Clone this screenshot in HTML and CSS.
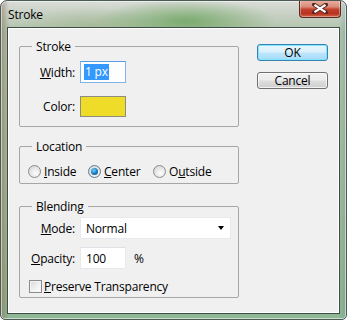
FILE: index.html
```html
<!DOCTYPE html>
<html>
<head>
<meta charset="utf-8">
<link rel="stylesheet" href="styles.css">
</head>
<body>
<div class="window">
  <div class="titlebar">
    <span class="title">Stroke</span>
    <div class="close">
      <svg width="16" height="11" viewBox="0 0 16 11">
        <path d="M2 1.5 L14 9.5 M14 1.5 L2 9.5" stroke="#5a2a22" stroke-width="4" stroke-linecap="square"/>
        <path d="M2.5 1.8 L13.5 9.2 M13.5 1.8 L2.5 9.2" stroke="#ffffff" stroke-width="2.2" stroke-linecap="butt"/>
      </svg>
    </div>
  </div>
  <div class="client">
    <div class="groups">
      <fieldset class="group g-stroke">
        <legend>Stroke</legend>
        <div class="gbody stroke-body">
          <div class="row row-width">
            <label class="lbl"><u>W</u>idth:</label>
            <div class="textbox focused"><span class="sel">1 px</span></div>
          </div>
          <div class="row row-color">
            <label class="lbl">Color:</label>
            <div class="swatch"></div>
          </div>
        </div>
      </fieldset>
      <fieldset class="group g-location">
        <legend>Location</legend>
        <div class="gbody location-body">
          <span class="opt opt-inside"><span class="radio"></span><span><u>I</u>nside</span></span>
          <span class="opt opt-center"><span class="radio checked"><span class="dot"></span></span><span><u>C</u>enter</span></span>
          <span class="opt opt-outside"><span class="radio"></span><span>O<u>u</u>tside</span></span>
        </div>
      </fieldset>
      <fieldset class="group g-blending">
        <legend>Blending</legend>
        <div class="gbody blending-body">
          <div class="row row-mode">
            <label class="lbl"><u>M</u>ode:</label>
            <div class="select"><span>Normal</span><span class="arrow"></span></div>
          </div>
          <div class="row row-opacity">
            <label class="lbl"><u>O</u>pacity:</label>
            <div class="textbox plain"><span>100</span></div>
            <span class="pct">%</span>
          </div>
          <div class="row row-check">
            <span class="checkbox"></span><span><u>P</u>reserve Transparency</span>
          </div>
        </div>
      </fieldset>
    </div>
    <div class="buttons">
      <button class="btn default">OK</button>
      <button class="btn">Cancel</button>
    </div>
  </div>
</div>
</body>
</html>
```
FILE: styles.css
```css
html, body {
  margin: 0;
  padding: 0;
  background: #ffffff;
}
body {
  font-family: "Open Sans", "Noto Sans", sans-serif;
  font-size: 12px;
  letter-spacing: -0.2px;
  color: #000;
}
.window {
  width: 347px;
  height: 320px;
  box-sizing: border-box;
  border: 1px solid #4c5a54;
  border-radius: 7px 7px 5px 5px;
  display: flex;
  flex-direction: column;
  overflow: hidden;
  box-shadow: inset 0 0 0 1px rgba(255,255,255,0.55);
  background:
    radial-gradient(ellipse 90px 22px at 185px 20px, rgba(100,160,85,0.75), rgba(100,160,85,0) 100%),
    radial-gradient(ellipse 70px 18px at 90px 24px, rgba(150,175,130,0.5), rgba(150,175,130,0) 100%),
    linear-gradient(to right, rgba(130,100,80,0.5) 0px, rgba(130,100,80,0) 8px, rgba(0,0,0,0) 338px, rgba(90,150,150,0.45) 347px),
    linear-gradient(to bottom, #d9dcd8 0px, #c9d2c6 12px, #b3c4ad 28px, #a9bd9e 150px, #96b48c 300px, #8db898 320px);
}
.titlebar {
  height: 26px;
  flex: none;
  display: flex;
  align-items: center;
  justify-content: space-between;
  padding-left: 7px;
}
.title {
  font-size: 12px;
  color: #000;
  line-height: 16px;
  margin-top: 1px;
}
.close {
  align-self: flex-start;
  margin-top: -1px;
  margin-right: 5px;
  width: 42px;
  height: 18px;
  box-sizing: border-box;
  border: 1px solid #5a2b22;
  border-top: none;
  border-radius: 0 0 4px 4px;
  background: linear-gradient(to bottom, #e8b3a6 0%, #d98b78 40%, #c2412c 55%, #b8321f 80%, #d06a4a 100%);
  box-shadow: inset 0 0 0 1px rgba(255,255,255,0.35);
  display: flex;
  align-items: center;
  justify-content: center;
}
.client {
  flex: none;
  height: 287px;
  margin: 0 6px 0 6px;
  box-sizing: border-box;
  border: 1px solid #3e4c46;
  box-shadow: inset 0 0 0 1px #ffffff;
  background: #f0f0f0;
  padding: 11px 11px 0 11px;
  display: flex;
  align-items: flex-start;
}
.groups {
  width: 220px;
  display: flex;
  flex-direction: column;
}
.group {
  margin: 0;
  padding: 0;
  border: 1px solid #a6a6a6;
  border-radius: 2px;
  min-width: 0;
}
.group legend {
  padding: 0 4px;
  margin-left: 12px;
  line-height: 15px;
  height: 15px;
}
.g-location { margin-top: 12px; }
.g-blending { margin-top: 15px; }
.gbody {
  display: flex;
  flex-direction: column;
}
.stroke-body { padding: 7px 0 9px 0; gap: 13px; }
.row {
  display: flex;
  align-items: center;
}
.lbl {
  width: 55px;
  text-align: right;
  margin-right: 5px;
  flex: none;
}
.row-width { height: 22px; }
.row-color { height: 21px; }
.textbox {
  width: 46px;
  height: 22px;
  box-sizing: border-box;
  background: #fff;
  display: flex;
  align-items: center;
  padding-left: 3px;
}
.textbox.focused {
  border: 1px solid #7eb4ea;
  border-top-color: #569de5;
}
.textbox.plain {
  border: 1px solid #e6e9ee;
  border-top-color: #dde1e6;
  padding-left: 5px;
}
.sel {
  background: #3399ff;
  color: #fff;
  padding: 0 1px;
  line-height: 16px;
}
.swatch {
  width: 46px;
  height: 21px;
  box-sizing: border-box;
  border: 1px solid #8c8c80;
  background: #efdc28;
}
.location-body {
  flex-direction: row;
  align-items: center;
  height: 20px;
  padding: 7px 0 2px 8px;
}
.opt {
  display: flex;
  align-items: center;
  flex: none;
}
.opt-inside { width: 60px; }
.opt-center { width: 65px; }
.radio {
  width: 13px;
  height: 13px;
  box-sizing: border-box;
  border-radius: 50%;
  border: 1px solid #8b8b8b;
  background: radial-gradient(circle at 60% 65%, #fdfdfd 0%, #e4e4e4 55%, #cfcfcf 100%);
  margin-right: 3px;
  display: flex;
  align-items: center;
  justify-content: center;
  flex: none;
}
.radio.checked { border-color: #5b7a96; }
.dot {
  width: 7px;
  height: 7px;
  border-radius: 50%;
  background: radial-gradient(circle at 40% 35%, #6fd0ff 0%, #1a76b8 55%, #0c3f70 100%);
}
.blending-body { padding: 3px 0 4px 0; }
.row-mode { height: 22px; }
.row-opacity { height: 22px; margin-top: 8px; }
.row-check { height: 14px; margin-top: 10px; padding-left: 9px; }
.select {
  width: 151px;
  height: 22px;
  box-sizing: border-box;
  background: #fff;
  border: 1px solid #e6e9ee;
  display: flex;
  align-items: center;
  justify-content: space-between;
  padding: 0 6px 0 5px;
}
.arrow {
  width: 0;
  height: 0;
  border-left: 3.5px solid transparent;
  border-right: 3.5px solid transparent;
  border-top: 4px solid #000;
}
.pct { margin-left: 8px; }
.checkbox {
  width: 13px;
  height: 13px;
  box-sizing: border-box;
  border: 1px solid #8b8b8b;
  background: linear-gradient(135deg, #d6d6d6 0%, #f2f2f2 60%, #fdfdfd 100%);
  box-shadow: inset 0 0 0 1px #f4f4f4;
  margin-right: 2px;
  flex: none;
}
.buttons {
  margin-left: 18px;
  margin-top: 5px;
  display: flex;
  flex-direction: column;
  gap: 11px;
}
.btn {
  width: 71px;
  height: 17px;
  box-sizing: border-box;
  font-family: inherit;
  font-size: 12px;
  letter-spacing: inherit;
  line-height: 14px;
  padding: 0;
  color: #000;
  border: 1px solid #707070;
  border-radius: 3px;
  background: linear-gradient(to bottom, #f2f2f2 0%, #ebebeb 48%, #dddddd 52%, #cfcfcf 100%);
  box-shadow: inset 0 0 0 1px rgba(255,255,255,0.7);
}
.btn.default {
  border-color: #3c7fb1;
  background: linear-gradient(to bottom, #eaf6fd 0%, #d9f0fc 48%, #bee6fd 52%, #a7d9f5 100%);
  box-shadow: inset 0 0 0 1px #7ce8ff;
}
```
